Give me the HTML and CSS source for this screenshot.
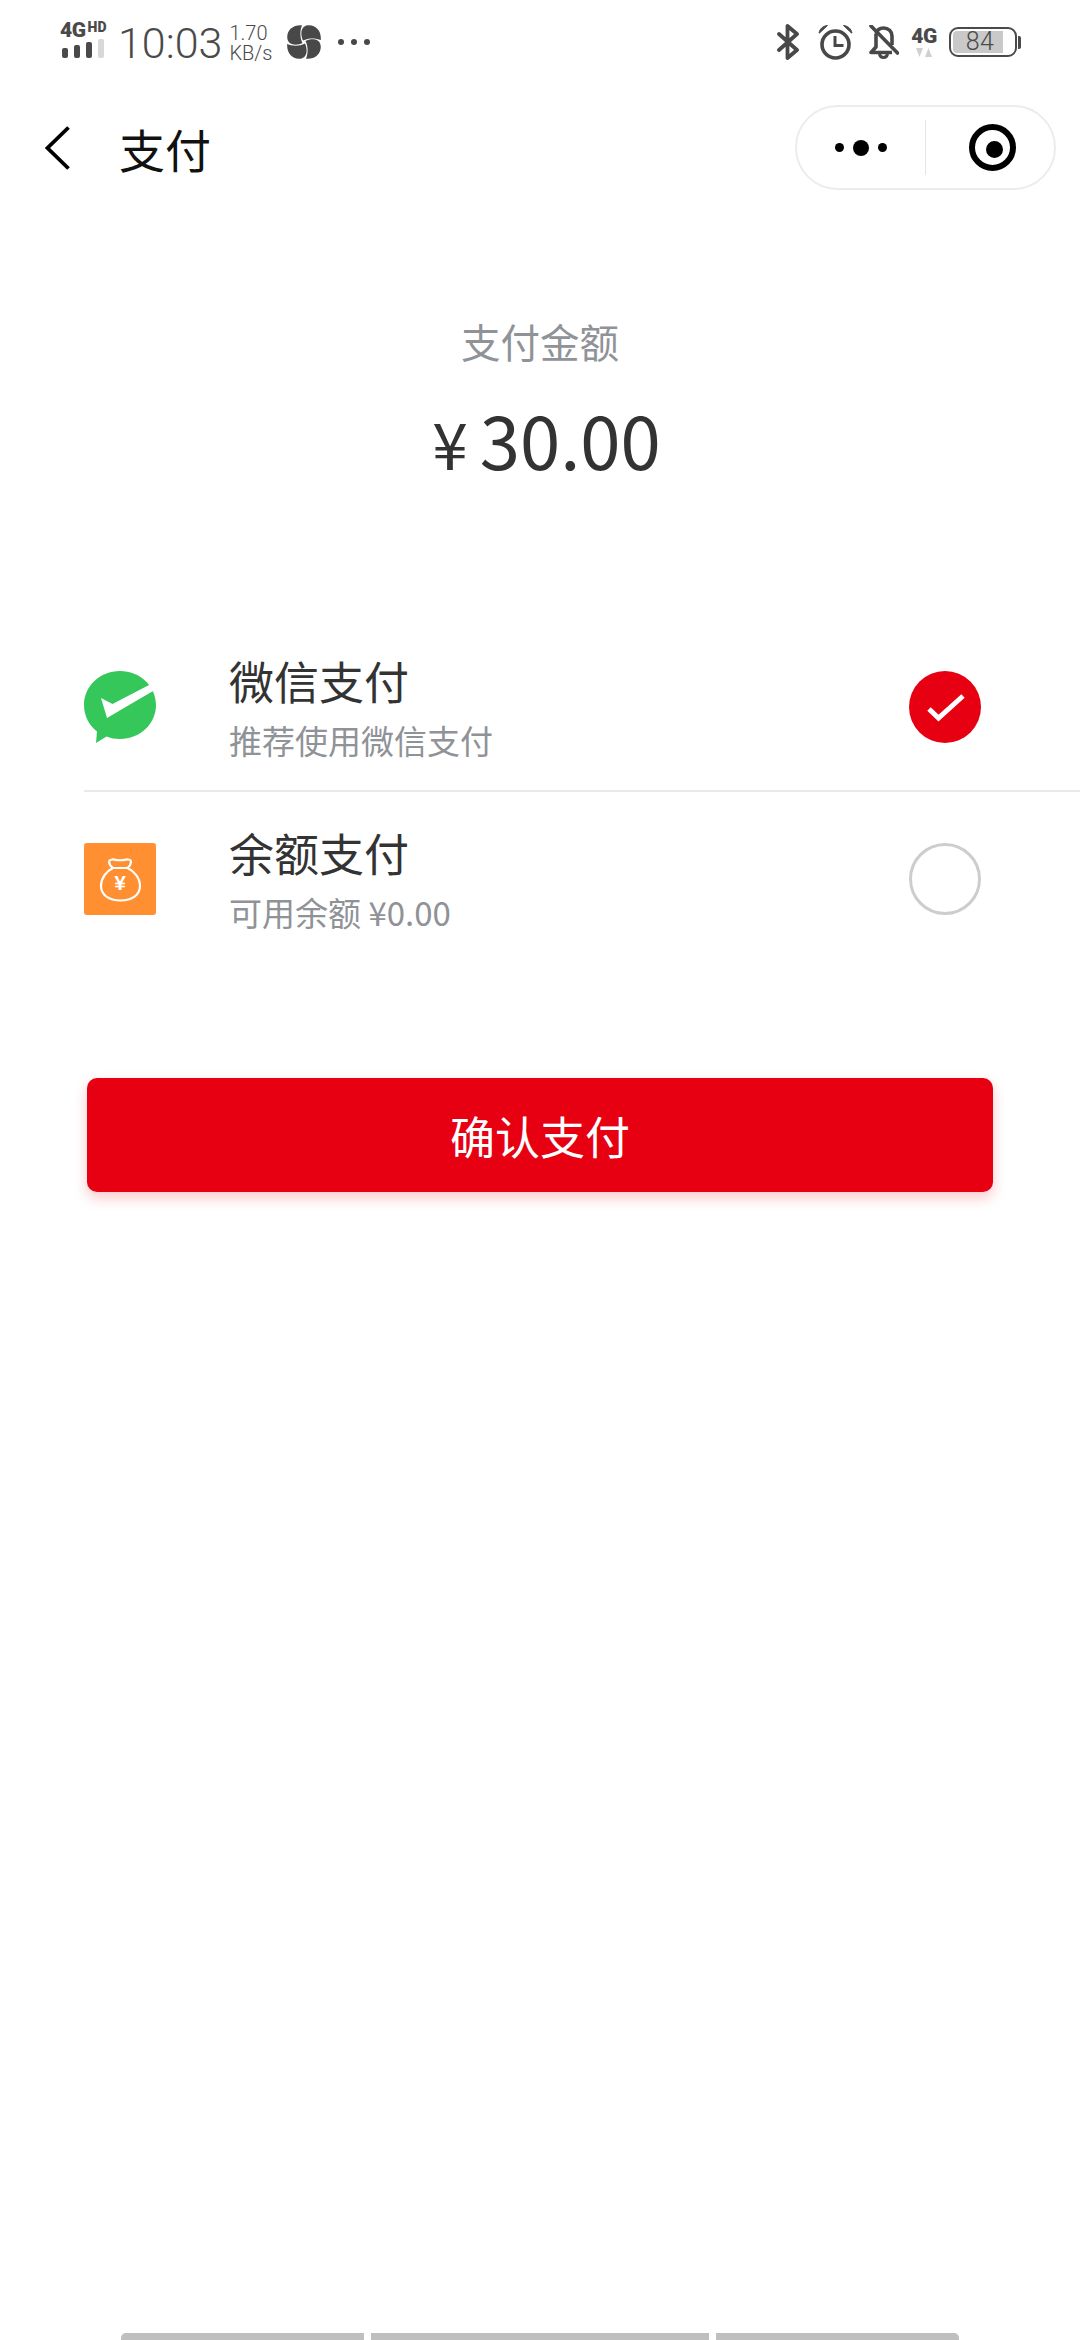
FILE: index.html
```html
<!DOCTYPE html>
<html lang="zh">
<head>
<meta charset="utf-8">
<title>支付</title>
<link rel="stylesheet" href="styles.css">
</head>
<body>
<div class="page">
  <div class="status">
    <div class="signal">
      <div class="signal-top"><span class="sig-4g">4G</span><span class="sig-hd">HD</span></div>
      <div class="bars">
        <i class="bar bar1"></i><i class="bar bar2"></i><i class="bar bar3"></i><i class="bar bar4"></i>
      </div>
    </div>
    <span class="time">10:03</span>
    <div class="speed"><span>1.70</span><span>KB/s</span></div>
    <svg class="pinwheel" width="34" height="34" viewBox="0 0 34 34">
      <g fill="#484848">
        <path id="petal" d="M16 15.500C13.500 10.500 13 1 21 .3 29 -.3 34.500 6 33.800 15 29 13 22 12.500 16 15.500Z"/>
        <use href="#petal" transform="rotate(90 17 17)"/>
        <use href="#petal" transform="rotate(180 17 17)"/>
        <use href="#petal" transform="rotate(270 17 17)"/>
      </g>
    </svg>
    <div class="more-dots"><i></i><i></i><i></i></div>

    <div class="status-right">
      <svg class="st-bt" width="24" height="36" viewBox="0 0 24 36">
        <path d="M3 10 21 26 11.500 34V2L21 10 3 26" fill="none" stroke="#484848" stroke-width="3.800" stroke-linecap="round" stroke-linejoin="round"/>
      </svg>
      <svg class="st-alarm" width="35" height="35" viewBox="0 0 35 35">
        <circle cx="17.500" cy="19.500" r="13.500" fill="none" stroke="#484848" stroke-width="3.600"/>
        <path d="M17 11V20.500H25.500" fill="none" stroke="#484848" stroke-width="3"/>
        <path d="M1 8C2 3.500 5 1 9.500 .5L1.500 8ZM34 8C33 3.500 30 1 25.500 .5L33.500 8Z" fill="#484848" stroke="#484848"/>
      </svg>
      <svg class="st-bell" width="30" height="35" viewBox="0 0 30 35">
        <path d="M7 9V22L2 27.500H23M7 9C8 5 11 3 14.500 3 19.500 3 23 6.500 23 11V20" fill="none" stroke="#484848" stroke-width="3.600" stroke-linejoin="round"/>
        <path d="M10.500 29C11 33.500 18 33.500 18.500 29" fill="none" stroke="#484848" stroke-width="3"/>
        <path d="M2 1 28.500 28" stroke="#484848" stroke-width="3.600" stroke-linecap="round"/>
      </svg>
      <div class="st-net">
        <span class="net-label">4G</span>
        <svg width="16" height="9" viewBox="0 0 16 9">
          <path d="M0 0H7L3.500 9ZM9 9H16L12.500 0Z" fill="#d0d0d0"/>
        </svg>
      </div>
      <div class="battery">
        <div class="battery-shell"><div class="battery-fill">84</div></div>
        <i class="battery-nub"></i>
      </div>
    </div>
  </div>

  <div class="nav">
    <svg class="back" width="25" height="44" viewBox="0 0 25 44">
      <path d="M23.500 1.500 2.500 22 23.500 42.500" fill="none" stroke="#000" stroke-width="3.800"/>
    </svg>
    <span class="nav-title">支付</span>
    <div class="capsule">
      <div class="capsule-more"><i></i><i class="big"></i><i></i></div>
      <div class="capsule-line"></div>
      <div class="capsule-close"><i></i></div>
    </div>
  </div>

  <div class="summary">
    <div class="summary-label">支付金额</div>
    <div class="summary-amount"><span class="yen">¥</span><span class="num">30.00</span></div>
  </div>

  <div class="pay-list">
    <div class="pay-row pay-first">
      <svg class="pay-icon" width="72" height="72" viewBox="0 0 72 72">
        <path d="M36 0C56 0 72 15.200 72 34 72 52.800 56 68 36 68 31 68 26.500 67.200 22.500 65.500L12 72 13 60.500C5 54.200 0 44.700 0 34 0 15.200 16 0 36 0Z" fill="#35c75a"/>
        <path d="M17 27 28.500 33 66 13.500 74 17 23 47Z" fill="#fff"/>
      </svg>
      <div class="pay-info">
        <div class="pay-name">微信支付</div>
        <div class="pay-desc">推荐使用微信支付</div>
      </div>
      <div class="radio radio-on">
        <svg width="72" height="72" viewBox="0 0 72 72">
          <path d="M20 38 29.500 47 54 25" fill="none" stroke="#fff" stroke-width="5"/>
        </svg>
      </div>
    </div>
    <div class="pay-row pay-second">
      <div class="pay-icon balance-icon">
        <svg width="72" height="72" viewBox="0 0 72 72">
          <path d="M29 25C24 21 24 17 28 16.500 31 16 33 18 36 17 39 18 41.500 16 44.500 16.500 48 17 48 21 43.500 25 50 28 56 35 56 43 56 52 48 57.500 36.500 57.500 25 57.500 17 52 17 43 17 35 22.500 28 29 25ZM29 25H43.500" fill="none" stroke="#fff" stroke-width="2.200"/>
          <text class="bag-yen" x="36" y="47" text-anchor="middle">¥</text>
        </svg>
      </div>
      <div class="pay-info">
        <div class="pay-name">余额支付</div>
        <div class="pay-desc">可用余额 ¥0.00</div>
      </div>
      <div class="radio"></div>
    </div>
  </div>

  <button class="confirm" type="button">确认支付</button>

  <div class="gesture">
    <i class="gesture-side"></i><i class="gesture-mid"></i><i class="gesture-side gesture-end"></i>
  </div>
</div>
</body>
</html>
```

FILE: styles.css
```css
html,body {margin:0; padding:0; background:#fff;}
body {font-family:"Noto Sans CJK SC", "Noto Sans", sans-serif; color:#333;}
i {display:block;}
.page {display:flex; flex-direction:column; height:2340px; overflow:hidden;}

/* status bar */
.status {display:flex; align-items:center; height:84px; padding:0 59px 0 60px; color:#4a4a4a; font-family:Roboto, sans-serif; box-sizing:border-box;}
.signal {width:46px; height:36px; display:flex; flex-direction:column; justify-content:space-between; margin-top:-5px;}
.signal-top {display:flex; height:16px; line-height:16px; font-weight:900;}
.sig-4g {font-size:21px; letter-spacing:-.5px;}
.sig-hd {font-size:14px; margin:-3px 0 0 2px; letter-spacing:.2px;}
.bars {display:flex; align-items:flex-end; gap:6px; height:19px; padding-left:2px;}
.bar {width:6px; background:#4a4a4a; border-radius:2px;}
.bar1 {height:10px;}
.bar2 {height:13px;}
.bar3 {height:16px;}
.bar4 {height:19px; background:#d8d8d8;}
.time {font-size:43px; font-weight:300; margin-left:12px; line-height:44px; margin-top:2px;}
.speed {display:flex; flex-direction:column; font-size:20px; line-height:20px; margin-left:7px; font-weight:300; margin-top:1px;}
.pinwheel {margin-left:15px; flex:none;}
.more-dots {display:flex; gap:7px; margin-left:17px;}
.more-dots i {width:6px; height:6px; border-radius:50%; background:#484848;}
.status-right {display:flex; align-items:center; margin-left:auto;}
.st-alarm {margin-left:18px;}
.st-bell {margin-left:16px;}
.st-net {display:flex; flex-direction:column; align-items:center; width:24px; margin-left:13px;}
.net-label {font-size:21px; font-weight:900; line-height:17px; letter-spacing:-.5px; margin-bottom:3px;}
.battery {display:flex; align-items:center; margin-left:13px;}
.battery-shell {width:68px; height:30px; box-sizing:border-box; border:2.500px solid #4a4a4a; border-radius:9px; padding:2px 12px 2px 2px;}
.battery-fill {height:100%; background:#c9c9c9; border-radius:4px 0 0 4px; font-size:25px; line-height:22px; font-weight:300; text-align:center; letter-spacing:.5px; padding-left:4px; box-sizing:border-box;}
.battery-nub {width:3px; height:13px; background:#4a4a4a; border-radius:0 2px 2px 0; margin-left:1px;}

/* title bar */
.nav {display:flex; align-items:center; height:85px; margin-top:21px; padding:0 24px 0 45px;}
.back {flex:none;}
.nav-title {font-size:46px; line-height:50px; color:#111; margin-left:49px;}
.capsule {display:flex; align-items:center; width:261px; height:85px; box-sizing:border-box; margin-left:auto; border:2px solid #ececec; border-radius:43px;}
.capsule-more {display:flex; align-items:center; justify-content:center; gap:9px; width:128px;}
.capsule-more i {width:9px; height:9px; border-radius:50%; background:#000;}
.capsule-more i.big {width:16px; height:16px;}
.capsule-line {width:1px; height:55px; background:#e4e4e4;}
.capsule-close {flex:1; display:flex; justify-content:center; padding-left:5px;}
.capsule-close i {width:47px; height:47px; box-sizing:border-box; border:6px solid #000; border-radius:50%; position:relative;}
.capsule-close i:after {content:""; position:absolute; left:11px; top:11px; width:13px; height:13px; border:2px solid #000; border-radius:50%; background:#000;}

/* amount */
.summary {text-align:center;}
.summary-label {margin-top:126px; font-size:39.500px; line-height:50px; color:#8f9297;}
.summary-amount {margin-top:23px; display:flex; justify-content:center; align-items:baseline; line-height:100px; padding-left:13px;}
.yen {font-size:64px; margin-right:12px; color:#333;}
.num {font-size:72.500px; color:#333;}

/* payment list */
.pay-list {margin-top:132px;}
.pay-row {display:flex; align-items:center; margin-left:84px; padding-right:99px;}
.pay-first {height:168px; border-bottom:2px solid #e9e9e9; box-sizing:border-box;}
.pay-second {height:174px;}
.pay-icon {width:72px; height:72px; flex:none;}
.balance-icon {background:#ff8f31; border-radius:3px;}
.balance-icon svg {display:block;}
.bag-yen {font-family:"Liberation Sans", sans-serif; font-size:21px; font-weight:700; fill:#fff;}
.pay-info {margin-left:73px;}
.pay-name {font-size:45px; line-height:56px; color:#333;}
.pay-desc {font-size:33px; line-height:44px; margin-top:9px; color:#8f9297;}
.radio {margin-left:auto; width:72px; height:72px; box-sizing:border-box; border:3px solid #cdcdcd; border-radius:50%; flex:none;}
.radio-on {border:none; background:#e60012;}
.radio-on svg {display:block;}

/* confirm */
.confirm {display:block; flex:none; width:906px; height:114px; margin:112px 0 0 87px; padding:0; border:none; border-radius:10px; background:#e60012; color:#fff; font-family:"Noto Sans CJK SC", sans-serif; font-size:45px; box-shadow:0 6px 14px rgba(230,0,18,.22);}

/* gesture bar */
.gesture {display:flex; gap:7px; margin:auto 0 0 121px; height:7px;}
.gesture i {height:7px; background:#bfbfbf;}
.gesture-side {width:243px; border-radius:5px 0 0 0;}
.gesture-mid {width:338px;}
.gesture-end {border-radius:0 5px 0 0;}
```
